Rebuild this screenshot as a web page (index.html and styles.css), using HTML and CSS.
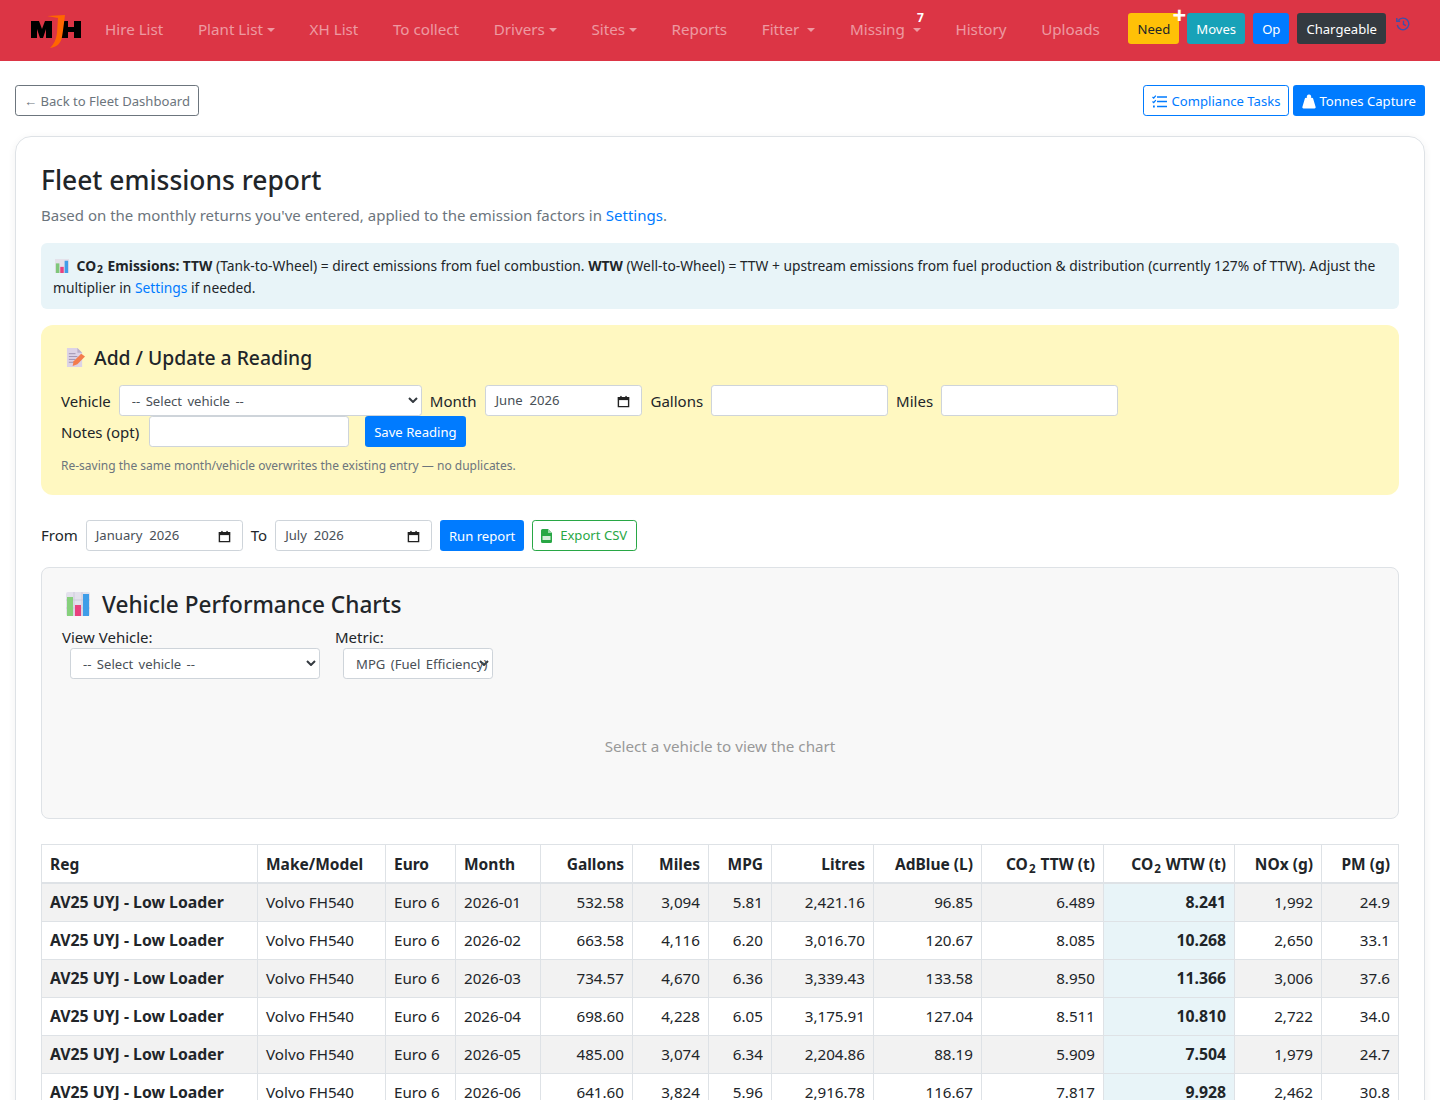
FILE: index.html
```html
<!DOCTYPE html>
<html lang="en">
<head>
    <meta charset="UTF-8">
    <meta name="viewport" content="width=device-width, initial-scale=1.0">
    <title>Fleet emissions report</title>
    <link rel="stylesheet" href="styles.css">
</head>
<body>

<!-- Top nav -->
<nav class="navbar">
    <a class="brand" href="#">
        <svg width="52" height="36" viewBox="0 0 52 36">
            <path d="M1 8h8l3 8 3-8h7v17h-6v-9l-3 9h-3l-3-9v9H1z" fill="#000"/>
            <path d="M31 8h7v6h6V8h7v17h-7v-6h-6v6h-7z" fill="#000"/>
            <path d="M17 3L35 2C34 10 33 18 32 24 31 30 27 34 20 35 24 31 26 27 27 20L28 5z" fill="#f60"/>
        </svg>
    </a>
    <a class="nav-link" href="#">Hire List</a>
    <a class="nav-link caret" href="#">Plant List</a>
    <a class="nav-link" href="#">XH List</a>
    <a class="nav-link" href="#">To collect</a>
    <a class="nav-link caret" href="#">Drivers</a>
    <a class="nav-link caret" href="#">Sites</a>
    <a class="nav-link" href="#">Reports</a>
    <a class="nav-link caret wide-caret" href="#">Fitter</a>
    <a class="nav-link caret wide-caret" href="#">Missing<span class="missing-count">7</span></a>
    <a class="nav-link" href="#">History</a>
    <a class="nav-link" href="#">Uploads</a>
    <div class="nav-buttons">
        <a class="btn btn-warning need" href="#">Need<span class="plus">+</span></a>
        <a class="btn btn-info" href="#">Moves</a>
        <a class="btn btn-primary" href="#">Op</a>
        <a class="btn btn-dark" href="#">Chargeable</a>
        <svg class="history-icon" width="14" height="14" viewBox="0 0 14 14" fill="none" stroke="#3f4fa8" stroke-width="1.400">
            <path d="M2.300 3.500A5.800 5.800 0 1 1 1.300 8"/>
            <path d="M.8 1v3.300h3.300"/>
            <path d="M7.500 3.800v3.500l2.300 1.400"/>
        </svg>
    </div>
</nav>

<main class="page">
    <div class="top-actions">
        <a class="btn btn-outline-secondary" href="#">← Back to Fleet Dashboard</a>
        <div class="top-actions-right">
            <a class="btn btn-outline-primary" href="#">
                <svg class="tasks-icon" width="15" height="13" viewBox="0 0 15 13" fill="none" stroke="#007bff">
                    <path d="M.5 2l1.200 1.100L3.800.6M.5 6.500l1.200 1.100 2.100-2.500" stroke-width="1.300"/>
                    <path d="M1 11.500h1.800" stroke-width="2"/>
                    <path d="M5 2h10M5 6.500h10M5 11.500h10" stroke-width="1.600"/>
                </svg>
                Compliance Tasks
            </a>
            <a class="btn btn-primary" href="#">
                <svg class="weight-icon" width="14" height="15" viewBox="0 0 15 15" fill="#fff">
                    <path d="M7.500 0a2.300 2.300 0 0 1 2 3.500h1.200c.6 0 1 .4 1.200.9l2.700 9c.2.800-.3 1.600-1.200 1.600H1.600c-.9 0-1.400-.8-1.200-1.600l2.700-9c.2-.5.600-.9 1.200-.9h1.200a2.300 2.300 0 0 1 2-3.500z"/>
                </svg>
                Tonnes Capture
            </a>
        </div>
    </div>

    <section class="report-card">
        <h1>Fleet emissions report</h1>
        <p class="lead-text">Based on the monthly returns you've entered, applied to the emission factors in <a href="#">Settings</a>.</p>

        <div class="info-box">
            <svg class="chart-emoji small" viewBox="0 0 16 16">
                <rect width="16" height="16" fill="#e4e1ea"/>
                <rect x="1" y="5" width="4" height="11" fill="#7fc77a"/>
                <rect x="6" y="9" width="4" height="7" fill="#e8417e"/>
                <rect x="11" y="2" width="4" height="14" fill="#3f9de8"/>
            </svg>
            <b>CO<sub>2</sub> Emissions: TTW</b> (Tank-to-Wheel) = direct emissions from fuel combustion. <b>WTW</b> (Well-to-Wheel) = TTW + upstream emissions from fuel production &amp; distribution (currently 127% of TTW). Adjust the multiplier in <a href="#">Settings</a> if needed.
        </div>

        <div class="reading-box">
            <h2>
                <svg class="memo-emoji" viewBox="0 0 20 20">
                    <path d="M1 0h11l5 5v15H1z" fill="#dcd3e6"/>
                    <path d="M12 0l5 5h-5z" fill="#b9aec8"/>
                    <path d="M3 6h7M3 9h9M3 12h7M3 15h6" stroke="#9c8fae" stroke-width="1"/>
                    <path d="M8 14l8-8 4 3-8 8-5 2z" fill="#f47c4c"/>
                </svg>
                Add / Update a Reading
            </h2>
            <form class="inline-form">
                <div class="form-group">
                    <label>Vehicle</label>
                    <select class="form-control vehicle-select"><option>-- Select vehicle --</option></select>
                </div>
                <div class="form-group">
                    <label class="month-label">Month</label>
                    <div class="form-control date-input">June 2026<svg class="cal" viewBox="0 0 14 14"><path d="M1.500 3h11v9.500h-11z" fill="none" stroke="#222" stroke-width="1.500"/><rect x="1" y="2.500" width="12" height="3" fill="#222"/><rect x="3.500" y="1" width="1.500" height="2" fill="#222"/><rect x="9" y="1" width="1.500" height="2" fill="#222"/></svg></div>
                </div>
                <div class="form-group">
                    <label>Gallons</label>
                    <input class="form-control number-input" type="text">
                </div>
                <div class="form-group">
                    <label>Miles</label>
                    <input class="form-control number-input" type="text">
                </div>
                <div class="form-group">
                    <label class="notes-label">Notes (opt)</label>
                    <input class="form-control notes-input" type="text">
                </div>
                <button class="btn btn-primary save-btn" type="button">Save Reading</button>
            </form>
            <small class="hint">Re-saving the same month/vehicle overwrites the existing entry — no duplicates.</small>
        </div>

        <form class="range-form">
            <label>From</label>
            <div class="form-control date-input">January 2026<svg class="cal" viewBox="0 0 14 14"><path d="M1.500 3h11v9.500h-11z" fill="none" stroke="#222" stroke-width="1.500"/><rect x="1" y="2.500" width="12" height="3" fill="#222"/><rect x="3.500" y="1" width="1.500" height="2" fill="#222"/><rect x="9" y="1" width="1.500" height="2" fill="#222"/></svg></div>
            <label>To</label>
            <div class="form-control date-input">July 2026<svg class="cal" viewBox="0 0 14 14"><path d="M1.500 3h11v9.500h-11z" fill="none" stroke="#222" stroke-width="1.500"/><rect x="1" y="2.500" width="12" height="3" fill="#222"/><rect x="3.500" y="1" width="1.500" height="2" fill="#222"/><rect x="9" y="1" width="1.500" height="2" fill="#222"/></svg></div>
            <button class="btn btn-primary run-btn" type="button">Run report</button>
            <a class="btn btn-outline-success export-btn" href="#">
                <svg class="csv-icon" width="11" height="14" viewBox="0 0 11 14"><path d="M0 1.500A1.500 1.500 0 0 1 1.500 0H7l4 4v8.500a1.500 1.500 0 0 1-1.500 1.500h-8A1.500 1.500 0 0 1 0 12.500z" fill="#28a745"/><path d="M7 0l4 4H7z" fill="#9ad5a8"/><rect x="1.500" y="7" width="8" height="4" fill="#d4edda"/></svg>
                Export CSV
            </a>
        </form>

        <section class="charts-box">
            <h3>
                <svg class="chart-emoji" viewBox="0 0 24 24">
                    <rect width="24" height="24" rx="2" fill="#e3e1ec"/>
                    <path d="M8 0v24M16 0v24M0 8h24M0 16h24" stroke="#cfcbdc"/>
                    <rect x="1" y="5" width="6" height="19" fill="#86d07c"/>
                    <rect x="9" y="13" width="6" height="11" fill="#e8417e"/>
                    <rect x="17" y="2" width="6" height="22" fill="#3f9de8"/>
                </svg>
                Vehicle Performance Charts
            </h3>
            <div class="chart-controls">
                <div class="chart-field vehicle-field">
                    <label>View Vehicle:</label>
                    <select class="form-control"><option>-- Select vehicle --</option></select>
                </div>
                <div class="chart-field metric-field">
                    <label>Metric:</label>
                    <select class="form-control"><option>MPG (Fuel Efficiency)</option></select>
                </div>
            </div>
            <div class="chart-empty">Select a vehicle to view the chart</div>
        </section>

        <table class="report-table">
            <colgroup>
                <col class="w-reg"><col class="w-make"><col class="w-euro"><col class="w-month"><col class="w-gallons"><col class="w-miles"><col class="w-mpg"><col class="w-litres"><col class="w-adblue"><col class="w-ttw"><col class="w-wtw"><col class="w-nox"><col class="w-pm">
            </colgroup>
            <thead>
                <tr>
                    <th>Reg</th><th>Make/Model</th><th>Euro</th><th>Month</th>
                    <th class="num">Gallons</th><th class="num">Miles</th><th class="num">MPG</th><th class="num">Litres</th><th class="num">AdBlue (L)</th>
                    <th class="num">CO<sub>2</sub> TTW (t)</th><th class="num">CO<sub>2</sub> WTW (t)</th><th class="num">NOx (g)</th><th class="num">PM (g)</th>
                </tr>
            </thead>
            <tbody>
                <tr><td class="reg">AV25 UYJ - Low Loader</td><td>Volvo FH540</td><td>Euro 6</td><td>2026-01</td><td class="num">532.58</td><td class="num">3,094</td><td class="num">5.81</td><td class="num">2,421.16</td><td class="num">96.85</td><td class="num">6.489</td><td class="num wtw">8.241</td><td class="num">1,992</td><td class="num">24.9</td></tr>
                <tr><td class="reg">AV25 UYJ - Low Loader</td><td>Volvo FH540</td><td>Euro 6</td><td>2026-02</td><td class="num">663.58</td><td class="num">4,116</td><td class="num">6.20</td><td class="num">3,016.70</td><td class="num">120.67</td><td class="num">8.085</td><td class="num wtw">10.268</td><td class="num">2,650</td><td class="num">33.1</td></tr>
                <tr><td class="reg">AV25 UYJ - Low Loader</td><td>Volvo FH540</td><td>Euro 6</td><td>2026-03</td><td class="num">734.57</td><td class="num">4,670</td><td class="num">6.36</td><td class="num">3,339.43</td><td class="num">133.58</td><td class="num">8.950</td><td class="num wtw">11.366</td><td class="num">3,006</td><td class="num">37.6</td></tr>
                <tr><td class="reg">AV25 UYJ - Low Loader</td><td>Volvo FH540</td><td>Euro 6</td><td>2026-04</td><td class="num">698.60</td><td class="num">4,228</td><td class="num">6.05</td><td class="num">3,175.91</td><td class="num">127.04</td><td class="num">8.511</td><td class="num wtw">10.810</td><td class="num">2,722</td><td class="num">34.0</td></tr>
                <tr><td class="reg">AV25 UYJ - Low Loader</td><td>Volvo FH540</td><td>Euro 6</td><td>2026-05</td><td class="num">485.00</td><td class="num">3,074</td><td class="num">6.34</td><td class="num">2,204.86</td><td class="num">88.19</td><td class="num">5.909</td><td class="num wtw">7.504</td><td class="num">1,979</td><td class="num">24.7</td></tr>
                <tr><td class="reg">AV25 UYJ - Low Loader</td><td>Volvo FH540</td><td>Euro 6</td><td>2026-06</td><td class="num">641.60</td><td class="num">3,824</td><td class="num">5.96</td><td class="num">2,916.78</td><td class="num">116.67</td><td class="num">7.817</td><td class="num wtw">9.928</td><td class="num">2,462</td><td class="num">30.8</td></tr>
            </tbody>
        </table>
    </section>
</main>

</body>
</html>
```

FILE: styles.css
```css
* {
    box-sizing: border-box;
}

html, body {
    height: 1100px;
    overflow: hidden;
}

body {
    margin: 0;
    font-family: "Noto Sans", "Open Sans", Arial, sans-serif;
    font-size: 15px;
    line-height: 1.5;
    color: #212529;
    background-color: #fff;
}

a {
    color: #007bff;
    text-decoration: none;
}

sub {
    font-size: 75%;
    line-height: 0;
    position: relative;
    bottom: -.25em;
    vertical-align: baseline;
    margin: 0 1px;
}

/* Nav */
.navbar {
    height: 61px;
    background-color: #dc3545;
    display: flex;
    align-items: center;
    padding: 0 30px;
}

.brand {
    display: flex;
    width: 75px;
    flex: none;
}

.nav-link {
    color: rgba(255, 255, 255, .5);
    font-size: 15.2px;
    margin: 0 34.6px 2px 0;
    white-space: nowrap;
    position: relative;
}

.nav-link:last-of-type {
    margin-right: 0;
}

.caret::after {
    content: "";
    display: inline-block;
    margin-left: 4px;
    vertical-align: 3px;
    border-top: 4.5px solid;
    border-left: 4.5px solid transparent;
    border-right: 4.5px solid transparent;
}

.wide-caret::after {
    margin-left: 8px;
}

.missing-count {
    position: absolute;
    top: -9px;
    right: -3px;
    color: #fff;
    font-size: 12px;
    font-weight: bold;
}

.nav-buttons {
    display: flex;
    align-items: center;
    margin: 0 0 4px auto;
    gap: 8px;
}

.btn {
    display: inline-flex;
    align-items: center;
    justify-content: center;
    height: 31px;
    padding: 2px 8px 0;
    font-family: inherit;
    font-size: 13.1px;
    border: 1px solid transparent;
    border-radius: 3.2px;
    white-space: nowrap;
    cursor: pointer;
}

.btn-warning {
    background-color: #ffc107;
    color: #212529;
}

.btn-info {
    background-color: #17a2b8;
    color: #fff;
}

.btn-primary {
    background-color: #007bff;
    color: #fff;
}

.btn-dark {
    background-color: #343a40;
    color: #fff;
}

.btn-outline-secondary {
    border-color: #6c757d;
    color: #6c757d;
}

.btn-outline-primary {
    border-color: #007bff;
    color: #007bff;
}

.btn-outline-success {
    border-color: #28a745;
    color: #28a745;
}

.need {
    position: relative;
}

.plus {
    position: absolute;
    top: -13px;
    right: -8px;
    color: #fff;
    font-size: 24px;
    font-weight: bold;
    line-height: 28px;
}

.history-icon {
    margin: -9px 0 0 2px;
}

.tasks-icon {
    margin-right: 5px;
}

.weight-icon {
    margin-right: 3px;
}

.csv-icon {
    margin-right: 8px;
}

/* Page */
.page {
    padding: 24px 15px 0;
}

.top-actions {
    display: flex;
    justify-content: space-between;
    margin-bottom: 20px;
}

.top-actions-right {
    display: flex;
    gap: 4px;
}

.report-card {
    border: 1px solid #dee2e6;
    border-radius: 16px;
    box-shadow: 0 2px 8px rgba(0, 0, 0, .06);
    padding: 24px 25px 0;
    height: 1000px;
}

h1 {
    margin: 0 0 5px;
    font-size: 26.4px;
    font-weight: 500;
    line-height: 38px;
}

.lead-text {
    margin: 0 0 16px;
    color: #6c757d;
    font-size: 15px;
}

.info-box {
    background-color: #e8f4f8;
    border-radius: 6px;
    padding: 12px;
    margin-bottom: 16px;
    font-size: 13.8px;
    line-height: 22px;
    height: 66px;
}

.chart-emoji.small {
    width: 14px;
    height: 14px;
    margin: 0 4px 0 2px;
    vertical-align: -2px;
}

.reading-box {
    background-color: #fff8c1;
    border-radius: 12px;
    padding: 16px 20px;
    height: 170px;
    margin-bottom: 25px;
}

h2 {
    display: flex;
    align-items: center;
    gap: 9px;
    margin: 0 0 10px;
    padding-left: 5px;
    font-size: 19.3px;
    font-weight: 500;
    line-height: 34px;
}

.memo-emoji {
    width: 19px;
    height: 19px;
}

.form-control {
    height: 31px;
    padding: 2px 9px 0;
    font-family: inherit;
    font-size: 13.1px;
    color: #495057;
    background-color: #fff;
    border: 1px solid #ced4da;
    border-radius: 3.2px;
}

select.form-control {
    appearance: none;
    padding: 2px 4px 0 12px;
    word-spacing: 2px;
    background-image: url("data:image/svg+xml,%3Csvg xmlns='http://www.w3.org/2000/svg' viewBox='0 0 10 6'%3E%3Cpath d='M1 1l4 4 4-4' fill='none' stroke='%23343a40' stroke-width='2'/%3E%3C/svg%3E");
    background-repeat: no-repeat;
    background-position: right 3px center;
    background-size: 10px 6px;
}

.inline-form {
    display: flex;
    flex-wrap: wrap;
    align-items: center;
}

.form-group {
    display: flex;
    align-items: center;
    gap: 8px;
    margin-right: 8px;
}

.inline-form label, .range-form label {
    white-space: nowrap;
}

.inline-form label {
    padding-top: 2px;
}

.month-label {
    padding-right: 1px;
}

.notes-label {
    padding-right: 2px;
}

.vehicle-select {
    width: 303px;
}

.date-input {
    display: flex;
    align-items: center;
    justify-content: space-between;
    width: 157px;
    word-spacing: 3.5px;
}

.cal {
    width: 13px;
    height: 13px;
    margin-right: 2px;
}

.number-input {
    width: 177px;
}

.notes-input {
    width: 200px;
}

.save-btn {
    margin-left: 8px;
}

.hint {
    display: block;
    margin-top: 10px;
    font-size: 12px;
    color: #6c757d;
}

.range-form {
    display: flex;
    align-items: center;
    gap: 8px;
    margin-bottom: 16px;
}

.run-btn {
    width: 84px;
}

.export-btn {
    padding-right: 9px;
}

.charts-box {
    height: 252px;
    background-color: #f8f8f8;
    border: 1px solid #dee2e6;
    border-radius: 8px;
    padding: 16px 20px;
    margin-bottom: 25px;
}

h3 {
    display: flex;
    align-items: center;
    gap: 12px;
    margin: 0;
    padding: 2px 0 0 4px;
    font-size: 22.6px;
    font-weight: 500;
    line-height: 38px;
}

.chart-emoji {
    width: 24px;
    height: 24px;
    margin-top: -2px;
}

.chart-controls {
    display: flex;
    margin-top: 1px;
}

.chart-field {
    display: flex;
    flex-direction: column;
    align-items: flex-start;
}

.chart-field label {
    padding-top: 1px;
    line-height: 22px;
}

.chart-field .form-control {
    margin-left: 8px;
}

.vehicle-field {
    width: 273px;
}

.vehicle-field .form-control {
    width: 250px;
}

.metric-field .form-control {
    width: 150px;
}

.chart-empty {
    margin-top: 56px;
    text-align: center;
    color: #999;
    font-size: 15.2px;
}

/* Table */
.report-table {
    width: 1357px;
    table-layout: fixed;
    border-collapse: collapse;
    font-size: 15.2px;
}

.w-reg { width: 216px; }
.w-make { width: 128px; }
.w-euro { width: 70px; }
.w-month { width: 85px; }
.w-gallons { width: 92px; }
.w-miles { width: 76px; }
.w-mpg { width: 63px; }
.w-litres { width: 102px; }
.w-adblue { width: 108px; }
.w-ttw { width: 122px; }
.w-wtw { width: 131px; }
.w-nox { width: 87px; }
.w-pm { width: 77px; }

.report-table th, .report-table td {
    border: 1px solid #dee2e6;
    padding: 0 8px;
    white-space: nowrap;
    height: 38px;
    text-align: left;
}

.report-table th {
    height: 39px;
    padding-top: 3px;
    font-size: 15.5px;
    font-weight: bold;
    border-bottom-width: 2px;
}

.report-table th.num, .report-table td.num {
    text-align: right;
}

.report-table tbody tr:nth-child(odd) td {
    background-color: #f2f2f2;
}

.report-table tbody tr td.wtw {
    padding-top: 2px;
    background-color: #e8f4f8;
    font-weight: bold;
    font-size: 15.8px;
}

.report-table td.reg {
    padding-top: 2px;
    font-weight: bold;
    font-size: 15.8px;
}
```
